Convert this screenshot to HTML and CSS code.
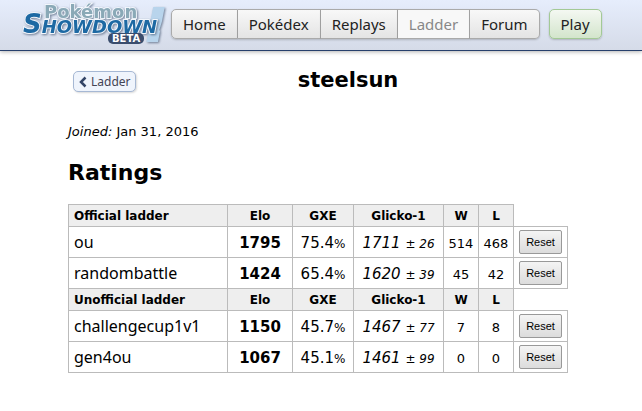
FILE: index.html
```html
<!DOCTYPE html>
<html lang="en">
<head>
  <meta charset="UTF-8">
  <title>steelsun - Pokémon Showdown</title>
  <link rel="stylesheet" href="styles.css">
</head>
<body>

  <header class="header">
    <a href="/" class="logo" aria-label="Pokémon Showdown (beta)">
      <svg width="148" height="50" viewBox="0 0 148 50">
        <text class="logo-mark" x="123" y="40">!</text>
        <text class="logo-top" x="21" y="18">Pokémon</text>
        <text class="logo-main" x="0" y="33"><tspan class="logo-initial">S</tspan>HOWDOWN</text>
        <rect class="logo-pill" x="85" y="33" width="36" height="11" rx="5"></rect>
        <text class="logo-beta" x="89" y="42">BETA</text>
      </svg>
    </a>
    <nav class="nav">
      <div class="nav-group">
        <a href="/">Home</a>
        <a href="/dex/">Pokédex</a>
        <a href="/replay/">Replays</a>
        <a href="/ladder/" class="cur">Ladder</a>
        <a href="/forums/">Forum</a>
      </div>
      <a href="/play/" class="play">Play</a>
    </nav>
  </header>

  <main class="main">
    <div class="title-row">
      <a href="/ladder/" class="pfx-backbutton">
        <svg width="8" height="12" viewBox="0 0 8 12"><path d="M6.5 1.5 L2 6 L6.5 10.5"></path></svg>
        Ladder
      </a>
      <h1>steelsun</h1>
    </div>

    <p class="joined"><em>Joined:</em> Jan 31, 2016</p>

    <h2>Ratings</h2>

    <table class="ratings">
      <colgroup>
        <col class="col-name">
        <col class="col-elo">
        <col class="col-gxe">
        <col class="col-glicko">
        <col class="col-count">
        <col class="col-count">
        <col class="col-reset">
      </colgroup>
      <tr>
        <th class="name">Official ladder</th><th>Elo</th><th>GXE</th><th>Glicko-1</th><th>W</th><th>L</th>
      </tr>
      <tr>
        <td class="name">ou</td><td><strong>1795</strong></td><td>75.4<small>%</small></td><td><em>1711 <small>± 26</small></em></td>
        <td class="count">514</td><td class="count">468</td><td class="reset"><button type="button">Reset</button></td>
      </tr>
      <tr>
        <td class="name">randombattle</td><td><strong>1424</strong></td><td>65.4<small>%</small></td><td><em>1620 <small>± 39</small></em></td>
        <td class="count">45</td><td class="count">42</td><td class="reset"><button type="button">Reset</button></td>
      </tr>
      <tr>
        <th class="name">Unofficial ladder</th><th>Elo</th><th>GXE</th><th>Glicko-1</th><th>W</th><th>L</th>
      </tr>
      <tr>
        <td class="name">challengecup1v1</td><td><strong>1150</strong></td><td>45.7<small>%</small></td><td><em>1467 <small>± 77</small></em></td>
        <td class="count">7</td><td class="count">8</td><td class="reset"><button type="button">Reset</button></td>
      </tr>
      <tr>
        <td class="name">gen4ou</td><td><strong>1067</strong></td><td>45.1<small>%</small></td><td><em>1461 <small>± 99</small></em></td>
        <td class="count">0</td><td class="count">0</td><td class="reset"><button type="button">Reset</button></td>
      </tr>
    </table>
  </main>

</body>
</html>
```

FILE: styles.css
```css
body {
  margin: 0;
  background: #fff;
  color: #000;
  font-family: Verdana, "DejaVu Sans", sans-serif;
  font-size: 13px;
}

/* Header */
.header {
  display: flex;
  align-items: flex-start;
  height: 50px;
  padding-left: 23px;
  background: linear-gradient(#e6edfc, #d5dbe8);
  border-bottom: 1px solid #27406c;
  box-shadow: 0 1px 4px rgba(0, 0, 0, 0.3);
}

.logo svg {
  display: block;
  overflow: visible;
}

.logo text {
  font-family: "DejaVu Sans", sans-serif;
  font-weight: bold;
  paint-order: stroke;
  stroke: #f2f6fc;
  stroke-width: 2px;
  filter: drop-shadow(1px 1px 1px rgba(40, 60, 90, 0.6));
}

.logo .logo-top {
  font-size: 18px;
  fill: #8aa9b7;
}

.logo .logo-main {
  font-size: 18px;
  font-style: italic;
  fill: #1d69a3;
}

.logo .logo-initial {
  font-size: 26px;
}

.logo .logo-mark {
  font-size: 42px;
  font-style: italic;
  fill: #b8d4ec;
  stroke: #b8d4ec;
  stroke-width: 4px;
}

.logo-pill {
  fill: #3a4d6d;
}

.logo .logo-beta {
  font-size: 10px;
  fill: #fff;
  stroke: none;
  filter: none;
}

.nav {
  display: flex;
  gap: 9px;
  padding-top: 9px;
}

.nav a {
  padding: 0 11px;
  border: 1px solid #aaa;
  background: linear-gradient(#f8f8f8, #e4e4e4);
  color: #222;
  font-family: "Noto Sans", sans-serif;
  font-size: 15px;
  line-height: 28px;
  text-decoration: none;
  box-shadow: 0 1px 2px rgba(0, 0, 0, 0.2);
}

.nav-group {
  display: flex;
}

.nav-group a + a {
  border-left: 0;
}

.nav-group a:first-child {
  border-radius: 5px 0 0 5px;
}

.nav-group a:last-child {
  border-radius: 0 5px 5px 0;
}

.nav .cur {
  background: #f8f8f8;
  color: #888;
}

.nav .play {
  border-color: #a3c996;
  border-radius: 5px;
  background: linear-gradient(#f4f8f2, #d3e5cc);
}

/* Page */
.main {
  padding: 20px 14px 20px 68px;
}

.title-row {
  display: grid;
  grid-template-columns: 1fr auto 1fr;
  align-items: start;
}

.pfx-backbutton {
  justify-self: start;
  display: flex;
  align-items: center;
  gap: 4px;
  margin-left: 5px;
  padding: 0 4px 0 5px;
  border: 1px solid #a6b8d4;
  border-radius: 5px;
  background: #eff4fc;
  color: #445;
  font-family: "Noto Sans", sans-serif;
  font-size: 12px;
  line-height: 19px;
  text-decoration: none;
  box-shadow: 1px 1px 2px rgba(0, 0, 0, 0.15);
}

.pfx-backbutton svg path {
  fill: none;
  stroke: #334466;
  stroke-width: 2.5;
}

h1 {
  margin: 0;
  font-size: 21px;
  line-height: 18px;
}

.joined {
  margin: 31px 0 18px;
  line-height: 18px;
}

h2 {
  margin: 0 0 17px;
  font-size: 22px;
  line-height: 28px;
}

/* Ratings table */
.ratings {
  table-layout: fixed;
  width: 500px;
  max-width: 100%;
  border-collapse: collapse;
}

.col-name { width: 159px; }
.col-elo { width: 65px; }
.col-gxe { width: 61px; }
.col-glicko { width: 90px; }
.col-count { width: 35px; }
.col-reset { width: 54px; }

.ratings th,
.ratings td {
  padding: 0;
  border: 1px solid #bbb;
  text-align: center;
  white-space: nowrap;
}

.ratings th {
  height: 21px;
  background: #eee;
  font-size: 12px;
}

.ratings td {
  height: 28px;
  padding-top: 2px;
  font-size: 15px;
}

.ratings .reset {
  height: 30px;
  padding-top: 0;
}

.ratings .name {
  padding-left: 5px;
  text-align: left;
}

.ratings td.name {
  height: 30px;
  padding-top: 0;
  font-family: "Noto Sans", sans-serif;
  font-size: 16px;
}

.ratings small {
  font-size: 12px;
}

.ratings .count {
  font-size: 13px;
}

.ratings button {
  display: block;
  width: 43px;
  height: 24px;
  margin: 0 auto;
  padding: 0;
  border: 1px solid #999;
  border-radius: 2px;
  background: linear-gradient(#f4f4f4, #dcdcdc);
  color: #000;
  font-family: "Liberation Sans", Arial, sans-serif;
  font-size: 11px;
}
```
